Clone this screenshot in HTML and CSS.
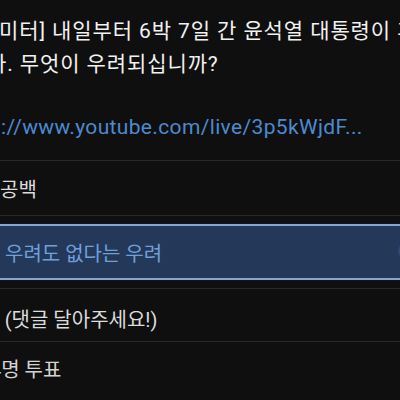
FILE: index.html
```html
<!DOCTYPE html>
<html lang="ko">
<head>
<meta charset="utf-8">
<link rel="stylesheet" href="styles.css">
</head>
<body>
<div class="screen">
  <div class="title">
    <span class="line line-1">미터] 내일부터 6박 7일 간 윤석열 대통령이 휴가를</span>
    <span class="line line-2">다. 무엇이 우려되십니까?</span>
  </div>
  <div class="link">://www.youtube.com/live/3p5kWjdF...</div>
  <div class="option option-plain option-first"><span class="label">공백</span></div>
  <div class="option option-wrap">
    <div class="option-selected">
      <span class="label">우려도 없다는 우려</span>
      <span class="check"></span>
    </div>
  </div>
  <div class="option option-plain option-etc"><span class="label etc">기타 (댓글 달아주세요!)</span></div>
  <div class="footer"><span class="votes">4명 투표</span></div>
</div>
</body>
</html>
```

FILE: styles.css
```css
html, body {
  margin: 0;
  padding: 0;
  background: #0f0f0f;
}
.screen {
  width: 400px;
  height: 400px;
  overflow: hidden;
  font-family: Roboto, "Noto Sans CJK KR", sans-serif;
  font-size: 20px;
  color: #efefef;
}
.title {
  padding-top: 15px;
  line-height: 33px;
  white-space: nowrap;
  font-size: 21px;
  letter-spacing: 0.9px;
  color: #f2f2f2;
}
.line {
  display: block;
}
.line-1 {
  margin-left: -1px;
}
.line-2 {
  margin-left: -13px;
}
.link {
  margin-top: 30px;
  line-height: 33px;
  font-size: 21px;
  letter-spacing: 0.35px;
  color: #4d8ad0;
  white-space: nowrap;
  margin-left: 1px;
}
.option {
  border-top: 1px solid #2b2925;
  white-space: nowrap;
}
.option-first {
  margin-top: 16px;
}
.option-plain {
  height: 54px;
  display: flex;
  align-items: center;
  color: #dcdcdc;
}
.option-wrap {
  padding: 8px 0;
  height: 56px;
}
.option-selected {
  position: relative;
  height: 52px;
  background: #243859;
  border-top: 2px solid #8aa5cf;
  border-bottom: 2px solid #8aa5cf;
  box-shadow: 0 -1px 0 #0b1526, 0 1px 0 #0b1526;
  display: flex;
  align-items: center;
  color: #6fa0dc;
}
.option-selected .label {
  margin-left: 5px;
}
.check {
  position: absolute;
  right: -12px;
  top: 18px;
  width: 14px;
  height: 14px;
  border-radius: 50%;
  background: #3a6db5;
  opacity: 0.35;
}
.option-etc {
  height: 53px;
  padding-top: 6px;
  box-sizing: border-box;
}
.etc {
  margin-left: -37px;
}
.footer {
  border-top: 1px solid #2b2925;
  height: 52px;
  display: flex;
  align-items: center;
  color: #d4d4d4;
}
.votes {
  margin-left: -10px;
}
```
